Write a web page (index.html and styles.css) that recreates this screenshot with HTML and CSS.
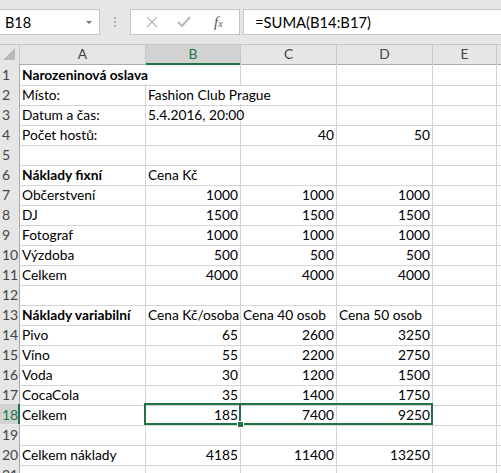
FILE: index.html
```html
<!DOCTYPE html>
<html>
<head>
    <title>Narozeninová oslava</title>
    <link rel="stylesheet" href="styles.css">
</head>
<body>
    <div class="toolbar">
        <div class="name-box">
            <span>B18</span>
            <span class="arrow"></span>
        </div>
        <div class="dots"><i></i><i></i><i></i></div>
        <div class="fx-buttons">
            <svg width="12" height="12" viewBox="0 0 12 12"><path d="M1 1 L11 11 M11 1 L1 11" stroke="#b9b9b9" stroke-width="1.4" fill="none"/></svg>
            <svg width="14" height="12" viewBox="0 0 14 12"><path d="M1 6 L5 10 L13 1" stroke="#b9b9b9" stroke-width="2" fill="none"/></svg>
            <span class="fx">f<sub>x</sub></span>
        </div>
        <div class="formula">=SUMA(B14:B17)</div>
    </div>

    <div class="sheet">
        <div class="row head">
            <div class="corner"><svg width="12" height="12" viewBox="0 0 12 12"><path d="M12 0 L12 12 L0 12 Z" fill="#b8b8b8"/></svg></div>
            <div>A</div>
            <div class="active">B</div>
            <div>C</div>
            <div>D</div>
            <div>E</div>
            <div></div>
        </div>
        <div class="row"><div class="num">1</div><div class="bold over">Narozeninová oslava</div><div></div><div></div><div></div><div></div><div></div></div>
        <div class="row"><div class="num">2</div><div>Místo:</div><div class="over">Fashion Club Prague</div><div></div><div></div><div></div><div></div></div>
        <div class="row"><div class="num">3</div><div>Datum a čas:</div><div>5.4.2016, 20:00</div><div></div><div></div><div></div><div></div></div>
        <div class="row"><div class="num">4</div><div>Počet hostů:</div><div></div><div class="r">40</div><div class="r">50</div><div></div><div></div></div>
        <div class="row"><div class="num">5</div><div></div><div></div><div></div><div></div><div></div><div></div></div>
        <div class="row"><div class="num">6</div><div class="bold">Náklady fixní</div><div>Cena Kč</div><div></div><div></div><div></div><div></div></div>
        <div class="row"><div class="num">7</div><div>Občerstvení</div><div class="r">1000</div><div class="r">1000</div><div class="r">1000</div><div></div><div></div></div>
        <div class="row"><div class="num">8</div><div>DJ</div><div class="r">1500</div><div class="r">1500</div><div class="r">1500</div><div></div><div></div></div>
        <div class="row"><div class="num">9</div><div>Fotograf</div><div class="r">1000</div><div class="r">1000</div><div class="r">1000</div><div></div><div></div></div>
        <div class="row"><div class="num">10</div><div>Výzdoba</div><div class="r">500</div><div class="r">500</div><div class="r">500</div><div></div><div></div></div>
        <div class="row"><div class="num">11</div><div>Celkem</div><div class="r">4000</div><div class="r">4000</div><div class="r">4000</div><div></div><div></div></div>
        <div class="row"><div class="num">12</div><div></div><div></div><div></div><div></div><div></div><div></div></div>
        <div class="row"><div class="num">13</div><div class="bold">Náklady variabilní</div><div>Cena Kč/osoba</div><div>Cena 40 osob</div><div>Cena 50 osob</div><div></div><div></div></div>
        <div class="row"><div class="num">14</div><div>Pivo</div><div class="r">65</div><div class="r">2600</div><div class="r">3250</div><div></div><div></div></div>
        <div class="row"><div class="num">15</div><div>Víno</div><div class="r">55</div><div class="r">2200</div><div class="r">2750</div><div></div><div></div></div>
        <div class="row"><div class="num">16</div><div>Voda</div><div class="r">30</div><div class="r">1200</div><div class="r">1500</div><div></div><div></div></div>
        <div class="row"><div class="num">17</div><div>CocaCola</div><div class="r">35</div><div class="r">1400</div><div class="r">1750</div><div></div><div></div></div>
        <div class="row"><div class="num active">18</div><div>Celkem</div><div class="r">185</div><div class="r">7400</div><div class="r">9250</div><div></div><div></div></div>
        <div class="row"><div class="num">19</div><div></div><div></div><div></div><div></div><div></div><div></div></div>
        <div class="row"><div class="num">20</div><div>Celkem náklady</div><div class="r">4185</div><div class="r">11400</div><div class="r">13250</div><div></div><div></div></div>
        <div class="row"><div class="num">21</div><div></div><div></div><div></div><div></div><div></div><div></div></div>

        <!-- výběr B18:D18 -->
        <div class="selection"></div>
        <div class="active-edge"></div>
        <div class="handle"></div>
    </div>
</body>
</html>
```

FILE: styles.css
```css
body {
    margin: 0;
    font-family: Lato, "Open Sans", sans-serif;
    font-size: 13.75px;
    color: #000;
    background: #fff;
    overflow: hidden;
}
.toolbar {
    display: flex;
    align-items: center;
    height: 44px;
    background: #e6e6e6;
}
.name-box {
    display: flex;
    align-items: center;
    justify-content: space-between;
    box-sizing: border-box;
    width: 100px;
    height: 26px;
    padding: 0 7px 0 5px;
    background: #fff;
    border: 1px solid #c6c6c6;
    border-left: none;
    font-size: 14.5px;
}
.name-box .arrow {
    border-left: 3px solid transparent;
    border-right: 3px solid transparent;
    border-top: 3px solid #777;
}
.dots {
    display: flex;
    flex-direction: column;
    gap: 2px;
    width: 30px;
    align-items: center;
}
.dots i {
    width: 2px;
    height: 2px;
    background: #b0b0b0;
}
.fx-buttons {
    display: flex;
    align-items: center;
    box-sizing: border-box;
    width: 110px;
    height: 26px;
    padding: 0 0 0 15px;
    gap: 19px;
    background: #fff;
    border: 1px solid #c6c6c6;
}
.fx {
    font-family: "Liberation Serif", serif;
    font-style: italic;
    font-size: 15px;
    color: #555;
    margin-left: 4px;
}
.fx sub {
    font-size: 10px;
    vertical-align: 0;
}
.formula {
    flex: 1;
    box-sizing: border-box;
    height: 26px;
    margin-left: 3px;
    padding: 0 11px;
    line-height: 24px;
    font-size: 14.75px;
    background: #fff;
    border: 1px solid #c6c6c6;
    border-right: none;
}
.sheet {
    position: relative;
}
.row {
    display: grid;
    grid-template-columns: 20px 126px 95px 96px 96px 64px 1fr;
    height: 20px;
}
.row > div {
    box-sizing: border-box;
    padding: 0 2px;
    line-height: 21px;
    white-space: nowrap;
    border-right: 1px solid #d4d4d4;
    border-bottom: 1px solid #d4d4d4;
}
.row > .r {
    text-align: right;
}
.row > .bold {
    font-weight: bold;
}
.row > .over {
    border-right-color: transparent;
    overflow: visible;
    position: relative;
    z-index: 1;
}
.head > div {
    background: #e6e6e6;
    color: #444;
    text-align: center;
    border-right-color: #c6c6c6;
    border-bottom-color: #ababab;
    border-top: 1px solid #c6c6c6;
    line-height: 18px;
}
.head > div.corner {
    display: flex;
    align-items: flex-end;
    justify-content: flex-end;
    padding: 0 4px 4px 0;
}
.head > div.active {
    background: #d2d2d2;
    color: #217346;
    border-bottom: 2px solid #217346;
}
.row > .num {
    background: #e6e6e6;
    color: #444;
    padding: 0 0 0 2px;
    font-size: 14px;
    border-right-color: #ababab;
    border-bottom-color: #c6c6c6;
}
.row > .num.active {
    background: #d2d2d2;
    color: #217346;
    border-right: 2px solid #217346;
}
.selection {
    position: absolute;
    left: 144px;
    top: 359px;
    width: 289px;
    height: 22px;
    box-sizing: border-box;
    border: 2px solid #217346;
}
.active-edge {
    position: absolute;
    left: 239px;
    top: 361px;
    width: 2px;
    height: 18px;
    background: #217346;
}
.handle {
    position: absolute;
    left: 237px;
    top: 377px;
    width: 5px;
    height: 5px;
    background: #217346;
    border: 1px solid #fff;
}
```
